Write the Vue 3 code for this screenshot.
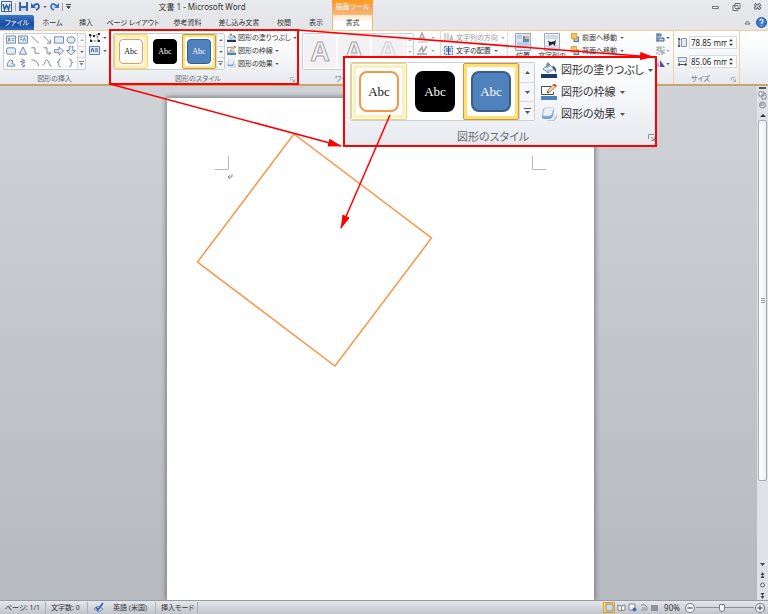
<script setup>
import { ref } from 'vue'

const tabs = ['ホーム', '挿入', 'ページ レイアウト', '参考資料', '差し込み文書', '校閲', '表示']
const shapeCells = [
  'M0 1h10v8H0zM2 7l1-4 1 4M6 4h2M6 6h2', 'M0 1h10v8H0zM2 3h2M2 5h2M5 7l1.500-4L8 7', 'M1 1l8 8', 'M1 1l8 8M9 5v4H5', 'M0 2h10v7H0z', 'M5 2c6 0 6 7 0 7s-6-7 0-7z',
  'M2 2h6q2 0 2 2v3q0 2-2 2H2Q0 9 0 7V4q0-2 2-2z', 'M5 1l4 8H1z', 'M1 2h4v6h5', 'M1 2h4v6h4M7 6l2 2-2 2', 'M0 4h5V1l5 4.500-5 4.500V7H0z', 'M3 0v5H0l5 5 5-5H7V0z',
  'M1 9V6l3-4 3 1-1 3 3 1v2z', 'M3 1l4 2-5 1 5 1-4 2 3 2M4 10l3-1-1-2', 'M1 2q7 0 8 7', 'M0 8C3 8 3 1 5 2s2 6 5 7', 'M7 1Q4 1 5 4L3 5l2 1Q4 10 7 9', 'M3 1q3 0 2 3l2 1-2 1q1 4-2 3'
]
const styleTiles = ['outline', 'black', 'blue']
const styleCommands = [
  { icon: '#i-fill', label: '図形の塗りつぶし' },
  { icon: '#i-pen', label: '図形の枠線' },
  { icon: '#i-effect', label: '図形の効果' }
]
const height = ref('78.85 mm')
const width = ref('85.06 mm')
const zoom = ref(90)
</script>

<template>
  <div class="app">
    <svg class="defs" aria-hidden="true">
      <symbol id="i-fill" viewBox="0 0 16 16">
        <path d="M0 12h16v4H0z" fill="#1f3a60" />
        <path d="M2 7l6-5 5 5-6 4z" fill="#e9f0f8" stroke="#5a7290" stroke-width=".8" />
        <path d="M4 7.500h8l-5 3z" fill="#a9c3e0" />
        <path d="M6 6V1.500q1-1.500 2 0V5" fill="none" stroke="#3c5878" stroke-width=".9" />
        <path d="M11 4q5 0 4 7l-3-5z" fill="#27568f" />
      </symbol>
      <symbol id="i-pen" viewBox="0 0 16 16">
        <path d="M0 12h16v4H0z" fill="#4f81bd" />
        <path d="M.5 10.500v-8H10M.5 10.500h12V8" fill="#fff" stroke="#454d57" />
        <path d="M6 9l1-3 6-6 2.500 2L9 8z" fill="#f0cf93" stroke="#8d6a44" stroke-width=".7" />
        <path d="M12 1l1-1q2 0 2.500 2l-1 1z" fill="#c2412c" />
        <path d="M6 9l.6-2 1.400 1.200z" fill="#333" />
      </symbol>
      <symbol id="i-effect" viewBox="0 0 16 16">
        <path d="M5 14h7l4-6v4l-3 3H8z" fill="#a9b6cb" opacity=".7" />
        <path d="M4 2h7q2.500 0 2 3l-1 5q-1 3-4 3H4q-4 0-3-3l1-5q0-3 2-3z" fill="#7c9fd0" />
        <path d="M5 1.500h6q2 0 1.500 2L11 8q-1 2-3 2H3.500Q1 10 2 7.500l1-4q.5-2 2-2z" fill="#e9f1fc" stroke="#b1c6e3" stroke-width=".6" />
      </symbol>
      <symbol id="i-caret" viewBox="0 0 5 3"><path d="M0 0h5L2.500 3z" fill="currentColor" /></symbol>
      <symbol id="i-up" viewBox="0 0 5 3"><path d="M0 3h5L2.500 0z" fill="currentColor" /></symbol>
      <symbol id="i-more" viewBox="0 0 7 7"><path d="M0 0h7v1H0zM1 3h5L3.500 6z" fill="currentColor" /></symbol>
      <symbol id="i-launch" viewBox="0 0 7 7"><path d="M.5 5V.5H6M3 3l3 3M6.500 3v3.500H3" fill="none" stroke="#8b9098" /></symbol>
      <symbol id="i-layer" viewBox="0 0 10 10">
        <path d="M4 4h6v6H4z" fill="#626c7a" /><path d="M5 5h4v4H5z" fill="#b9c3d1" />
        <path d="M1.500.5h6v6h-6z" fill="#f6c15c" stroke="#d59a3e" />
      </symbol>
    </svg>

    <header class="titlebar">
      <div class="quick">
        <svg class="i11" viewBox="0 0 11 11"><path d="M.5.5h10v10H.5z" fill="#eef4fc" stroke="#3264a8" /><path d="M2 3l1.500 5.500L5.500 4l2 4.500L9 3" fill="none" stroke="#2458a5" stroke-width="1.500" /></svg>
        <span class="divider"></span>
        <button aria-label="保存"><svg class="i9" viewBox="0 0 9 9"><path d="M0 0h9v9H0z" fill="#3d64b0" /><path d="M2 0h5v4H2z" fill="#e6eefa" /><path d="M2 6h5v3H2z" fill="#c4d2e8" /></svg></button>
        <button aria-label="元に戻す"><svg class="i9" viewBox="0 0 9 9"><path d="M2 4q5-4 6 0 0 3-3 4" fill="none" stroke="#2f62b5" stroke-width="1.800" /><path d="M0 1v5h5z" fill="#2f62b5" /></svg></button>
        <svg class="caret"><use href="#i-caret" /></svg>
        <button aria-label="やり直し"><svg class="i9" viewBox="0 0 9 9"><path d="M7 4Q2 0 1 4q0 3 3 4" fill="none" stroke="#3f78c0" stroke-width="1.800" /><path d="M9 1v5H4z" fill="#3f78c0" /></svg></button>
        <span class="divider"></span>
        <svg class="caret5" viewBox="0 0 5 5"><path d="M0 0h5v1H0zM0 2h5L2.500 5z" fill="#444" /></svg>
      </div>
      <h1>文書 1 - Microsoft Word</h1>
      <div class="context">描画ツール</div>
      <div class="window-buttons">
        <button aria-label="最小化"><svg class="i9" viewBox="0 0 9 9"><path d="M1.500 4.500h6v2h-6z" fill="#fff" stroke="#71767d" /></svg></button>
        <button aria-label="元のサイズに戻す"><svg class="i9" viewBox="0 0 9 9"><path d="M3 1.500h5v5H3zM1 3.500h5v5H1z" fill="#fff" stroke="#666b73" /></svg></button>
        <button aria-label="閉じる"><svg class="i9" viewBox="0 0 9 9"><path d="M1.500 2l6 5m0-5l-6 5" stroke="#676c74" stroke-width="3" /><path d="M2 2.500l5 4m0-4l-5 4" stroke="#fff" /></svg></button>
      </div>
    </header>

    <nav class="tabs">
      <button class="file">ファイル</button>
      <button v-for="t in tabs" :key="t">{{ t }}</button>
      <button class="active">書式</button>
      <div class="help">
        <svg class="i9" viewBox="0 0 9 9"><path d="M2 6l2.500-3L7 6z" fill="#fff" stroke="#666" /></svg>
        <svg class="i11" viewBox="0 0 11 11"><circle cx="5.500" cy="5.500" r="5" fill="#3b78cb" stroke="#255ba5" /><path d="M4 4q0-2 1.500-2T7 4q0 1-1.500 2v1M5.500 8v1" fill="none" stroke="#fff" stroke-width="1.200" /></svg>
      </div>
    </nav>

    <section class="ribbon">
      <div class="group shapes">
        <div class="body">
          <div class="gallery">
            <div class="shape-grid">
              <svg v-for="(d, i) in shapeCells" :key="i" class="shape" viewBox="-.5 0 11 11"><path :d="d" fill="#e3edf8" :fill-opacity="[2, 3, 8, 9, 13, 14, 15, 16, 17].includes(i) ? 0 : 1" stroke="#5b7594" stroke-width=".9" /></svg>
            </div>
            <div class="scroll"><button class="off" aria-label="上へ"><svg><use href="#i-up" /></svg></button><button aria-label="下へ"><svg><use href="#i-caret" /></svg></button><button aria-label="その他"><svg class="more"><use href="#i-more" /></svg></button></div>
          </div>
          <div class="commands">
            <button aria-label="図形の編集"><svg class="i11" viewBox="0 0 11 11"><path d="M2 9L1 3l4 1 5-2-2 4 2 3z" fill="none" stroke="#495b74" stroke-dasharray="2 1" /><path d="M0 2h2v2H0zM4 3h2v2H4zM9 1h2v2H9zM1 8h2v2H1zM9 8h2v2H9z" fill="#20252c" /></svg><svg class="caret"><use href="#i-caret" /></svg></button>
            <button aria-label="テキスト ボックス"><svg class="i11" viewBox="0 0 11 11"><path d="M.5 1.500h10v8H.5z" fill="#dbe7f5" stroke="#6681a4" /><path d="M2 7l1.500-4L5 7M6 4h3M6 6h3" fill="none" stroke="#385b89" /></svg><svg class="caret"><use href="#i-caret" /></svg></button>
          </div>
        </div>
        <div class="caption">図形の挿入</div>
      </div>

      <div class="group styles">
        <div class="body">
          <div class="gallery">
            <button v-for="s in styleTiles" :key="s" class="tile" :class="s"><span>Abc</span></button>
            <div class="scroll"><button aria-label="上へ"><svg><use href="#i-up" /></svg></button><button aria-label="下へ"><svg><use href="#i-caret" /></svg></button><button aria-label="その他"><svg class="more"><use href="#i-more" /></svg></button></div>
          </div>
          <div class="commands">
            <button v-for="c in styleCommands" :key="c.label"><svg class="i9"><use :href="c.icon" /></svg>{{ c.label }}<svg class="caret"><use href="#i-caret" /></svg></button>
          </div>
        </div>
        <div class="caption">図形のスタイル<svg class="launch"><use href="#i-launch" /></svg></div>
      </div>

      <div class="group wordart">
        <div class="body">
          <div class="gallery">
            <button v-for="n in 3" :key="n" class="art" :class="'art' + n">A</button>
            <div class="scroll off"><button aria-label="上へ"><svg><use href="#i-up" /></svg></button><button aria-label="下へ"><svg><use href="#i-caret" /></svg></button><button aria-label="その他"><svg class="more"><use href="#i-more" /></svg></button></div>
          </div>
          <div class="commands off">
            <button aria-label="文字の塗りつぶし"><svg class="i11" viewBox="0 0 11 11"><path d="M2 8l3-7 3 7M3 6h4" fill="none" stroke="#555" stroke-width="1.500" /><path d="M1 9h9v2H1z" fill="#bbb" /></svg><svg class="caret"><use href="#i-caret" /></svg></button>
            <button aria-label="文字の輪郭"><svg class="i11" viewBox="0 0 11 11"><path d="M2 7l3-5 1 5 4-6" fill="none" stroke="#555" stroke-width="1.500" /><path d="M0 8h10v2H0z" fill="#777" /></svg><svg class="caret"><use href="#i-caret" /></svg></button>
          </div>
        </div>
        <div class="caption">ワードアートのスタイル</div>
      </div>

      <div class="group text">
        <div class="body">
          <div class="commands">
            <button class="off"><svg class="i9" viewBox="0 0 9 9"><path d="M1 0v9M4 0v9M6 8l1.500-6L9 8M6 6h3" fill="none" stroke="#555a61" /></svg>文字列の方向<svg class="caret"><use href="#i-caret" /></svg></button>
            <button><svg class="i9" viewBox="0 0 9 9"><path d="M.5.500h8v8h-8z" fill="#dce9f8" stroke="#5779a7" stroke-dasharray="2 1" /><path d="M2 3h5M2 5h5M4.500 0v9" stroke="#315b98" /></svg>文字の配置<svg class="caret"><use href="#i-caret" /></svg></button>
          </div>
        </div>
      </div>

      <div class="group arrange">
        <div class="body">
          <button class="big"><svg viewBox="0 0 16 18"><path d="M.5.500h15v17H.5z" fill="#dce6f2" stroke="#9aa8bb" /><path d="M2 3h5M2 5h5M2 10h12M2 12h12M2 14h12" stroke="#9db3cd" /><path d="M8 3h6v6H8z" fill="#568ec4" /><path d="M10 3h4v3h-4z" fill="#e8b071" /></svg>位置</button>
          <button class="big wide"><svg viewBox="0 0 16 18"><path d="M.5.500h15v17H.5z" fill="#edf2f8" stroke="#9aa8bb" /><path d="M2 3h12M2 5h12M2 13h12M2 15h12" stroke="#b5c3d5" /><path d="M5 13q0-4-1-5l3 1 4-1 1-2-1 7-2-2z" fill="#222" /></svg>文字列の</button>
          <div class="commands">
            <button><svg class="i9"><use href="#i-layer" /></svg>前面へ移動<svg class="caret"><use href="#i-caret" /></svg></button>
            <button><svg class="i9"><use href="#i-layer" /></svg>背面へ移動<svg class="caret"><use href="#i-caret" /></svg></button>
          </div>
          <div class="commands end">
            <button aria-label="配置"><svg class="i9" viewBox="0 0 9 9"><path d="M1 0v9" stroke="#27456c" /><path d="M2 1h3v2H2zM2 5h6v3H2z" fill="#b9d0ed" stroke="#3e6598" /></svg><svg class="caret"><use href="#i-caret" /></svg></button>
            <button class="off" aria-label="グループ化"><svg class="i9" viewBox="0 0 9 9"><path d="M1 1h7v7H1z" fill="none" stroke="#333" stroke-dasharray="2 1" /><path d="M2 2h3v3H2zM5 5h2v2H5z" fill="none" stroke="#444" /></svg><svg class="caret"><use href="#i-caret" /></svg></button>
            <button aria-label="回転"><svg class="i9" viewBox="0 0 9 9"><path d="M0 8l3-6v6z" fill="#98b8df" /><path d="M4 1l5 7H4z" fill="#704296" /></svg><svg class="caret"><use href="#i-caret" /></svg></button>
          </div>
        </div>
      </div>

      <div class="group size">
        <div class="body">
          <label><svg class="i9" viewBox="0 0 9 9"><path d="M3.500.500h5v8h-5z" fill="#e1e9f3" stroke="#8594a9" /><path d="M1 0v9M0 2l1-2 1 2M0 7l1 2 1-2" fill="none" stroke="#454e5a" /></svg><span class="spin"><input v-model="height" aria-label="図形の高さ"><svg viewBox="0 0 5 9"><path d="M0 3h5L2.500 0zM0 6h5L2.500 9z" fill="#333" /></svg></span></label>
          <label><svg class="i9" viewBox="0 0 9 9"><path d="M.5.500h8v4h-8z" fill="#e1e9f3" stroke="#8594a9" /><path d="M0 7.500h9M2 6L0 7.500 2 9M7 6l2 1.500L7 9" fill="none" stroke="#454e5a" /></svg><span class="spin"><input v-model="width" aria-label="図形の幅"><svg viewBox="0 0 5 9"><path d="M0 3h5L2.500 0zM0 6h5L2.500 9z" fill="#333" /></svg></span></label>
        </div>
        <div class="caption">サイズ<svg class="launch"><use href="#i-launch" /></svg></div>
      </div>
    </section>

    <main class="workspace">
      <div class="desk">
        <article class="page">
          <svg class="drawing" viewBox="0 0 427 300">
            <path d="M61.500 58v13.500H48M365.500 58v13.500H379" fill="none" stroke="#b8b8b8" />
            <path d="M65 76v3h-4M63 77l-2 2 2 2" fill="none" stroke="#777" stroke-width=".8" />
            <path d="M127 36L264.500 140 168 268 30.500 164z" fill="none" stroke="#f79646" stroke-width="1.500" />
          </svg>
        </article>
      </div>
      <aside class="scrollbar">
        <svg class="tools" viewBox="0 0 11 34"><path d="M2 2h7" stroke="#555" stroke-width="2" /><path d="M2 6h5v4H2zM5 8h4v5H5z" fill="#f7f8fa" stroke="#83888f" /><circle cx="5.500" cy="19" r="3" fill="#d5d8dc" stroke="#8c9197" /><path d="M4 17v3M6 16v4" stroke="#8c9197" /><path d="M3 31h6l-3-3z" fill="#333" /></svg>
        <div class="track"><div class="thumb"><i></i></div></div>
        <svg class="browse" viewBox="0 0 11 40"><path d="M3 3h5L5.500 6zM3.500 15h4l-2-3zM3.500 18h4l-2-3zM3.500 33h4l-2 3zM3.500 36h4l-2 3z" fill="#444" /><circle cx="5.500" cy="25" r="2" fill="none" stroke="#666" /></svg>
      </aside>
    </main>

    <footer class="status">
      <span class="pages">ページ: 1/1</span>
      <span class="chars">文字数: 0</span>
      <span class="lang"><svg class="i11" viewBox="0 0 11 11"><path d="M1 7l4-3 5 3-4 3z" fill="#dce7f5" stroke="#788ba4" /><path d="M3 5l2 3 5-7" fill="none" stroke="#2961b8" stroke-width="1.600" /></svg>英語 (米国)</span>
      <span class="mode">挿入モード</span>
      <div class="views">
        <button class="on" aria-label="印刷レイアウト"><svg class="i9" viewBox="0 0 9 9"><path d="M1 1h7v7H1z" fill="#ced9e7" stroke="#8b8d8f" /></svg></button>
        <button aria-label="全画面閲覧"><svg class="i9" viewBox="0 0 9 9"><path d="M1 2l3 1 4-1v5l-4 1-3-1zM4.500 3v5" fill="#f5f5f5" stroke="#81868d" /></svg></button>
        <button aria-label="Web レイアウト"><svg class="i9" viewBox="0 0 9 9"><path d="M1 1h6v6H1z" fill="#f5f5f5" stroke="#81868d" /><circle cx="6.500" cy="6.500" r="2" fill="#376fb0" /></svg></button>
        <button aria-label="アウトライン"><svg class="i9" viewBox="0 0 9 9"><path d="M2 2h4l2 2v3H2M3 5h4" fill="none" stroke="#8d9299" /></svg></button>
        <button aria-label="下書き"><svg class="i9" viewBox="0 0 9 9"><path d="M1 2h7v6H1z" fill="#8e939a" /></svg></button>
      </div>
      <span class="percent">{{ zoom }}%</span>
      <button class="round" aria-label="縮小"><svg viewBox="0 0 9 9"><circle cx="4.500" cy="4.500" r="4" fill="#f7f8fa" stroke="#7c8188" /><path d="M2 4.500h5" stroke="#444" /></svg></button>
      <input v-model="zoom" type="range" min="10" max="190" aria-label="ズーム">
      <button class="round" aria-label="拡大"><svg viewBox="0 0 9 9"><circle cx="4.500" cy="4.500" r="4" fill="#f7f8fa" stroke="#7c8188" /><path d="M2 4.500h5M4.500 2v5" stroke="#444" /></svg></button>
    </footer>

    <div class="callout">
      <div class="body">
        <div class="gallery">
          <button v-for="s in styleTiles" :key="s" class="tile" :class="s"><span>Abc</span></button>
          <div class="scroll"><button aria-label="上へ"><svg><use href="#i-up" /></svg></button><button aria-label="下へ"><svg><use href="#i-caret" /></svg></button><button aria-label="その他"><svg class="more"><use href="#i-more" /></svg></button></div>
        </div>
        <div class="commands">
          <button v-for="c in styleCommands" :key="c.label"><svg class="i16"><use :href="c.icon" /></svg>{{ c.label }}<svg class="caret"><use href="#i-caret" /></svg></button>
        </div>
      </div>
      <div class="caption">図形のスタイル<svg class="launch"><use href="#i-launch" /></svg></div>
    </div>

    <svg class="notes" viewBox="0 0 768 614" aria-hidden="true">
      <defs><marker id="head" markerUnits="userSpaceOnUse" markerWidth="14" markerHeight="8" refX="13" refY="4" orient="auto"><path d="M0 0l14 4-14 4z" fill="#f00" /></marker></defs>
      <g fill="none" stroke="#f00" stroke-width="1.500">
        <path d="M110 30h188v54H110z" stroke-width="2" />
        <path d="M298 30L653 57" marker-end="url(#head)" />
        <path d="M110 84L341 146" marker-end="url(#head)" />
        <path d="M390 115L341 228" marker-end="url(#head)" />
      </g>
    </svg>
  </div>
</template>

<style>
body { margin: 0; }
</style>

<style scoped>
.app { position: relative; display: flex; flex-direction: column; min-height: 100vh; overflow: hidden; background: #e4e6e9; color: #333; font: 7px/10px "Noto Sans", "Noto Sans CJK JP", sans-serif; font-feature-settings: "palt"; }
.app *, .app { box-sizing: border-box; }
button { padding: 0; border: 0; background: none; color: inherit; font: inherit; font-feature-settings: inherit; white-space: nowrap; }
svg { display: block; flex: none; }
.defs { position: absolute; width: 0; height: 0; }
.i9 { width: 9px; height: 9px; }
.i11 { width: 11px; height: 11px; }
.i16 { width: 16px; height: 16px; }
.caret { width: 4px; height: 2px; color: #555; }
.caret5 { width: 5px; height: 5px; }
.off { opacity: .5; }

.titlebar { display: flex; height: 15px; background: linear-gradient(#e9ebee, #e4e6e9); }
.quick { display: flex; width: 72px; align-items: center; gap: 3px; padding: 0 0 2px 1px; }
.divider { width: 1px; height: 8px; background: #9ca1a8; }
h1 { width: 260px; margin: 0; font-size: 8px; font-weight: 400; line-height: 13px; text-align: center; }
.context { width: 41px; background: linear-gradient(#ff9a17, #f5a55c 50%, #f9b777); color: #fff; line-height: 14px; text-align: center; }
.window-buttons { display: flex; gap: 12px; margin-left: auto; padding: 0 6px 2px; align-items: center; }

.tabs { display: grid; grid-template-columns: 34px 37px 30px 64px 45px 58px 32px 32px 41px 1fr; height: 15px; background: #e4e6e9; }
.file { border-radius: 0 2px 0 0; background: linear-gradient(#3b76c6, #1b4c9d 60%, #2e6cc0); color: #fff; }
.active { border: solid #f3b56c; border-width: 0 1px; background: linear-gradient(#fde8ca, #fff 50%); }
.help { display: flex; justify-content: flex-end; align-items: center; gap: 4px; padding-right: 1px; }

.ribbon { display: flex; height: 56px; border-top: 1px solid #f8cc92; border-bottom: 2px solid #c8a66a; background: linear-gradient(#fff, #f6f7f9 50%, #e6e9ee); }
.group { display: flex; flex-direction: column; justify-content: space-between; border-right: 1px solid #ddd; }
.body { display: flex; gap: 3px; }
.ribbon .body { padding: 2px 0 0 3px; }
.ribbon .commands { margin-top: -2px; }
.shapes { width: 110px; }
.styles { width: 189px; }
.wordart { width: 142px; }
.text { width: 67px; }
.arrange { width: 166px; border-color: #f5cfa1; }
.size { width: 66px; border-color: #f5cfa1; }
.caption { display: flex; position: relative; justify-content: center; color: #666b73; line-height: 11px; }
.styles .caption, .size .caption { padding-right: 12px; }
.launch { position: absolute; right: 3px; bottom: 2px; width: 5px; height: 5px; }

.gallery { display: flex; border: 1px solid #c9ced5; border-radius: 2px; background: #fff; }
.ribbon .gallery { height: 37px; }
.shape-grid { display: grid; grid-template-columns: repeat(6, 12px); padding-left: 1px; align-items: center; justify-items: center; }
.shape { width: 10px; height: 10px; }
.scroll { display: grid; grid-template-rows: repeat(3, 1fr); width: 8px; border-left: 1px solid #d6dae0; background: #f5f6f8; color: #555; }
.scroll button { display: grid; place-items: center; }
.scroll button + button { border-top: 1px solid #d6dae0; }
.scroll svg { width: 4px; height: 2px; }
.scroll .more { width: 5px; height: 5px; }

.tile { display: grid; width: 34px; padding: 4px; border: 1px solid transparent; border-radius: 2px; font-family: "Liberation Serif", serif; font-size: 8px; color: #111; }
.tile span { display: grid; place-items: center; border: 1px solid; border-radius: 4px; }
.outline { border-color: #f5d561; box-shadow: inset 0 0 0 3px #fdf0bd; }
.outline span { border-color: #f79646; background: #fff; }
.black span { border-color: #000; background: #000; color: #fff; }
.blue { border-color: #c79a3c; box-shadow: inset 0 0 0 2px #ffe27c; }
.blue span { border-color: #385d8a; background: #4f81bd; color: #fff; }

.commands { display: flex; flex-direction: column; }
.commands button { display: flex; align-items: center; gap: 3px; height: 13px; }
.styles .body { gap: 2px; }
.styles .commands button { gap: 2px; }
.art { width: 32px; margin: 1px; border-radius: 2px; background: #f4f1f5; color: #f5f5f5; font: 700 27px/30px "Liberation Sans", sans-serif; -webkit-text-stroke: 1px #a5a5a5; }
.art3 { -webkit-text-stroke-color: #d0d0d0; }
.arrange .body { padding-left: 4px; }
.big { display: flex; flex-direction: column; align-items: center; width: 22px; height: 37px; overflow: hidden; }
.big.wide { width: 30px; }
.big svg { width: 16px; height: 18px; }
.end { margin-left: auto; padding-right: 3px; }
.end button { gap: 1px; }
.size .body { flex-direction: column; gap: 6px; padding: 5px 0 0 4px; }
.size label { display: flex; align-items: center; gap: 2px; }
.spin { display: flex; align-items: center; width: 48px; height: 13px; padding-right: 3px; border: 1px solid #d8dce2; background: #fff; }
.spin input { width: 38px; min-width: 0; padding: 0 1px; border: 0; outline: 0; background: none; color: #222; font: 8px/11px "Noto Sans", sans-serif; }
.spin svg { width: 4px; height: 7px; margin-left: auto; }

.workspace { display: flex; flex: 1; background: linear-gradient(#cfd2d6, #b6b9be); }
.desk { display: flex; flex: 1; justify-content: center; padding: 12px 0 0 4px; }
.page { width: 427px; background: #fff; box-shadow: 0 0 5px 1px #74787e; clip-path: inset(-6px -6px 0 -6px); }
.drawing { width: 427px; height: 300px; }
.scrollbar { display: flex; flex-direction: column; width: 11px; background: #dfe2e7; }
.tools { width: 11px; height: 34px; }
.track { flex: 1; padding: 0 1px; }
.thumb { display: grid; place-items: center; height: 82%; border: 1px solid #a5abb4; border-radius: 2px; background: linear-gradient(90deg, #fff, #eceef2); }
.thumb i { width: 4px; height: 5px; background: repeating-linear-gradient(#999 0 1px, #fff 1px 2px); }
.browse { width: 11px; height: 40px; }

.status { display: flex; align-items: center; height: 14px; padding-right: 3px; border-top: 1px solid #979ca3; background: linear-gradient(#e4e7eb, #c1c5cb); }
.status > span { display: flex; align-items: center; height: 11px; border-right: 1px solid #a9aeb6; }
.status .pages { width: 46px; padding-left: 5px; }
.status .chars { width: 42px; padding-left: 5px; }
.status .lang { width: 68px; gap: 9px; padding-left: 5px; }
.status .mode { width: 42px; padding-left: 5px; }
.views { display: flex; gap: 2px; margin-left: auto; }
.views button { display: grid; place-items: center; width: 9px; height: 11px; }
.views .on { width: 12px; border: 1px solid #e0a020; background: #ffdf7b; }
.status .percent { width: 26px; justify-content: center; border: 0; font-size: 8px; }
.round svg { width: 10px; height: 10px; }
.status input { width: 58px; height: 11px; margin: 0 1px; appearance: none; background: linear-gradient(#8b9098, #8b9098) center / 100% 1px no-repeat; }
.status input::-webkit-slider-thumb { appearance: none; width: 6px; height: 8px; border: 1px solid #777c84; border-radius: 1px 1px 3px 3px; background: #fafafa; }

.callout { position: absolute; top: 56px; left: 343px; display: flex; flex-direction: column; width: 314px; height: 91px; border: 2px solid #f00; background: linear-gradient(#fff, #f4f6f9 50%, #e6e9ee); font-size: 11px; line-height: 16px; }
.callout .body { gap: 6px; padding-left: 5px; }
.callout .gallery { height: 59px; margin-top: 4px; }
.callout .tile { width: 56px; padding: 7px; font-size: 13px; }
.callout .tile span { border-width: 2px; border-radius: 8px; }
.callout .outline { box-shadow: inset 0 0 0 1px #fff, inset 0 0 0 4px #fdf0bd; }
.callout .blue { box-shadow: inset 0 0 0 3px #ffe070; }
.callout .scroll { width: 15px; }
.callout .scroll svg { width: 5px; height: 3px; }
.callout .scroll .more { width: 7px; height: 7px; }
.callout .commands { padding-top: 1px; }
.callout .commands button { height: 22px; gap: 4px; }
.callout .caret { width: 5px; height: 3px; }
.callout .caption { margin-top: auto; padding-right: 14px; line-height: 17px; }
.callout .launch { right: 0; bottom: 4px; width: 7px; height: 7px; }
.notes { position: absolute; top: 0; left: 0; width: 768px; height: 614px; pointer-events: none; }
</style>
